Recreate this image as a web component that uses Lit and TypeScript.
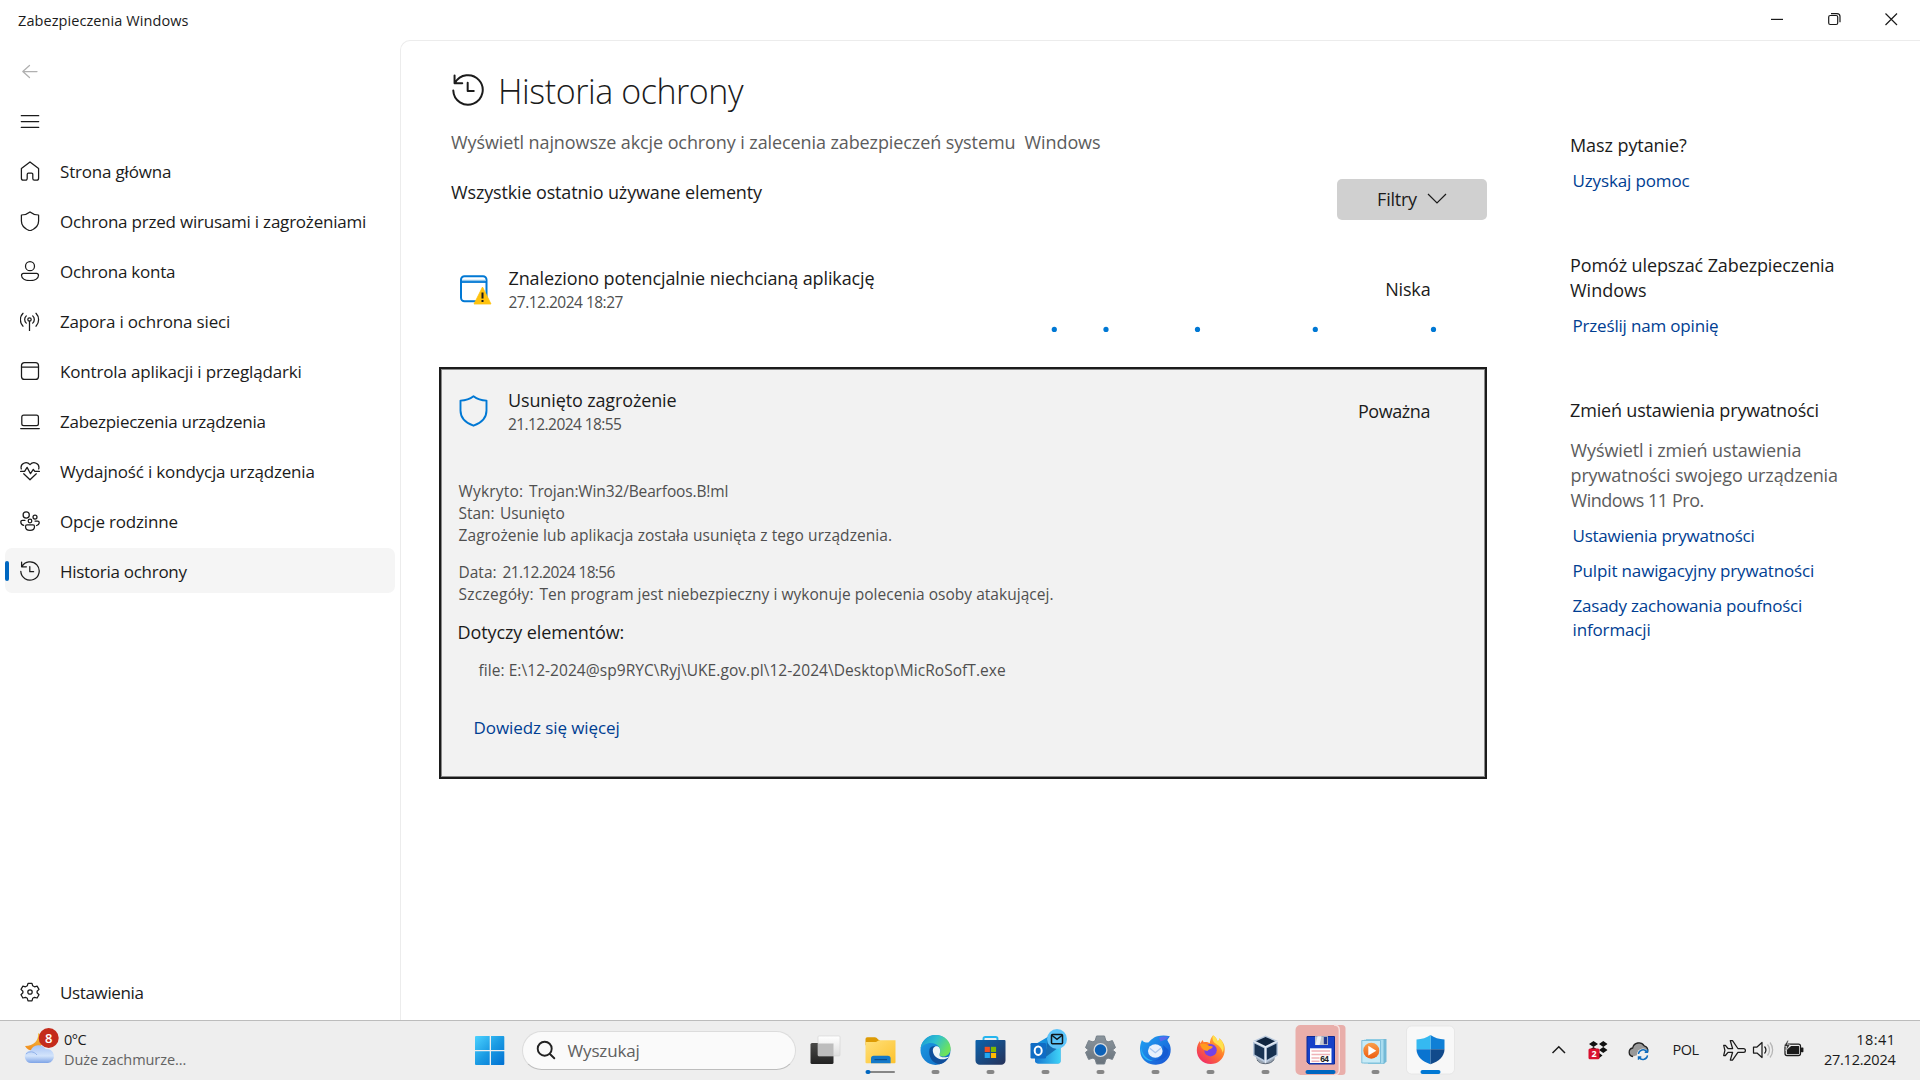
import { LitElement, html, css, svg, TemplateResult, SVGTemplateResult } from "lit";
import { customElement, property } from "lit/decorators.js";

/** A single line of text whose tracking is tuned so its ink spans `ink` pixels. */
@customElement("fit-text")
class FitText extends LitElement {
  @property() text = "";
  @property({ type: Number }) ink = 0;

  static styles = css`
    :host { display: block; white-space: pre; width: max-content; }
  `;

  render() {
    return html`${this.text}`;
  }

  updated() {
    const cs = getComputedStyle(this);
    const ctx = document.createElement("canvas").getContext("2d");
    if (!ctx || !this.ink) return;
    ctx.font = `${cs.fontWeight} ${cs.fontSize} ${cs.fontFamily}`;
    const m = ctx.measureText(this.text);
    const natural = m.actualBoundingBoxLeft + m.actualBoundingBoxRight;
    const gap = (this.ink - natural) / Math.max(1, this.text.length - 1);
    this.style.letterSpacing = `${gap.toFixed(3)}px`;
  }
}

const t = (text: string, ink: number, cls = "") =>
  html`<fit-text class=${cls} .text=${text} .ink=${ink}></fit-text>`;

const stroke = (body: SVGTemplateResult, w = 1.25) =>
  html`<svg class="ico" viewBox="0 0 20 20" width="20" height="20" fill="none" stroke="currentColor" stroke-width=${w} stroke-linecap="round" stroke-linejoin="round">${body}</svg>`;

const historyShape = svg`<path d="M1.6 1v4.8h4.8M1.9 5.6A9.2 9.2 0 1 1 .8 10.3M9.8 5.5v5.2h3.8"/>`;

const NAV: { label: string; ink: number; icon: TemplateResult; active?: boolean }[] = [
  { label: "Strona główna", ink: 111, icon: stroke(svg`<path d="M1.4 7.6 10 .9l8.6 6.7v9.6a2 2 0 0 1-2 2h-2.2a1.6 1.6 0 0 1-1.6-1.6v-4.2a1.2 1.2 0 0 0-1.2-1.2H8.4a1.2 1.2 0 0 0-1.2 1.2v4.2a1.6 1.6 0 0 1-1.6 1.6H3.4a2 2 0 0 1-2-2z"/>`) },
  { label: "Ochrona przed wirusami i zagrożeniami", ink: 304, icon: stroke(svg`<path d="M10 .9c2.3 1.900 5.3 3 8.6 3.100v6c0 4.600-3.200 7.900-8.600 9.800-5.400-1.900-8.600-5.200-8.600-9.800V4C4.700 3.900 7.700 2.800 10 .9z"/>`) },
  { label: "Ochrona konta", ink: 114, icon: stroke(svg`<circle cx="10" cy="5.2" r="4.500"/><path d="M3.400 12.400h13.200a1.900 1.900 0 0 1 1.900 1.900c0 3.400-3.800 5.300-8.500 5.300s-8.500-1.900-8.500-5.300a1.900 1.900 0 0 1 1.900-1.900z"/>`) },
  { label: "Zapora i ochrona sieci", ink: 169, icon: stroke(svg`<circle cx="9.500" cy="8.500" r="1.700"/><path d="M9.500 10.200V20M6.300 12.100a4.800 4.800 0 0 1 0-7.200M12.700 12.100a4.800 4.800 0 0 0 0-7.200M3 15.200A9.300 9.300 0 0 1 3 2.300M16 15.200a9.300 9.300 0 0 0 0-12.900"/>`) },
  { label: "Kontrola aplikacji i przeglądarki", ink: 239.5, icon: stroke(svg`<rect x="1.500" y="1.600" width="17" height="16.800" rx="3"/><path d="M1.500 6h17"/>`) },
  { label: "Zabezpieczenia urządzenia", ink: 205.5, icon: stroke(svg`<rect x="1.800" y="4.200" width="16.600" height="10.400" rx="1.900"/><path d="M.7 17.500h18.600"/>`) },
  { label: "Wydajność i kondycja urządzenia", ink: 254.5, icon: stroke(svg`<path d="M1.300 8C-.1 2.500 6.500-.4 10 3.700 13.500-.4 20.100 2.500 18.700 8M.6 10.400h4l2.500-4 3.400 6.300 2.800-4.400 1.500 2.100h4.600M3.700 12.800l6.300 6 6.300-6"/>`) },
  { label: "Opcje rodzinne", ink: 116.5, icon: stroke(svg`<circle cx="6.200" cy="3.900" r="3.100"/><circle cx="15" cy="6.100" r="2"/><circle cx="10" cy="10" r="1.800"/><path d="M5 9.300H2.400A1.600 1.600 0 0 0 .8 10.900c0 1.800 1.200 3 2.900 3.500M15 10h2.600a1.600 1.600 0 0 1 1.600 1.600c0 1.600-1 2.600-2.700 2.900M7 13.900h6a1.500 1.500 0 0 1 1.500 1.500c0 2.400-1.900 3.900-4.500 3.900s-4.500-1.500-4.500-3.900A1.500 1.500 0 0 1 7 13.900z"/>`) },
  { label: "Historia ochrony", ink: 126.5, icon: stroke(historyShape), active: true },
];

const gearIcon = stroke(svg`<circle cx="10" cy="10" r="2.200"/><path d="M8 1.300h4l.7 2.500 1.800 1 2.600-.7 1.900 3.300-1.900 1.900v1.500l1.900 1.900-1.900 3.300-2.600-.7-1.800 1-.7 2.500H8l-.7-2.500-1.800-1-2.600.7L1 12.700l1.900-1.900V9.300L1 7.400l1.900-3.300 2.600.7 1.800-1z"/>`);

interface Slot { art: SVGTemplateResult; mark?: "idle" | "active" | "wide" | "group"; hot?: string }

const defs = svg`<defs>
  <linearGradient id="tvd" x2="0" y2="1"><stop stop-color="#4a4a48"/><stop offset="1" stop-color="#222"/></linearGradient>
  <linearGradient id="tvl" x2="0" y2="1"><stop stop-color="#fff"/><stop offset="1" stop-color="#dedede"/></linearGradient>
  <linearGradient id="fold" x2="1" y2="1"><stop stop-color="#ffe07a"/><stop offset="1" stop-color="#fdc22d"/></linearGradient>
  <linearGradient id="eb" x2="1" y2="1"><stop stop-color="#1d9fe6"/><stop offset="1" stop-color="#1067c2"/></linearGradient>
  <linearGradient id="eg" x1="0" x2="1" y2=".5"><stop stop-color="#1593d5"/><stop offset=".5" stop-color="#2fc0cf"/><stop offset="1" stop-color="#6de35c"/></linearGradient>
  <linearGradient id="store" x2="1" y2="1"><stop stop-color="#0c63ad"/><stop offset="1" stop-color="#263158"/></linearGradient>
  <linearGradient id="olk" x2="1" y2="0"><stop stop-color="#1675cf"/><stop offset="1" stop-color="#3fd3f8"/></linearGradient>
  <linearGradient id="gear" x2="0" y2="1"><stop stop-color="#8b959d"/><stop offset="1" stop-color="#69737c"/></linearGradient>
  <linearGradient id="tb" x2="1" y2="1"><stop stop-color="#1fa6f4"/><stop offset="1" stop-color="#1952d2"/></linearGradient>
  <linearGradient id="ff" x1="1" y1="0" x2=".2" y2="1"><stop stop-color="#ffd23f"/><stop offset=".5" stop-color="#ff7a2a"/><stop offset="1" stop-color="#f0286b"/></linearGradient>
  <linearGradient id="wmp" x2="0" y2="1"><stop stop-color="#f9a04b"/><stop offset="1" stop-color="#ee5d12"/></linearGradient>
</defs>`;

/* Taskbar art is drawn in a 55 x 60 cell. */
const SLOTS: Slot[] = [
  {
    art: svg`<rect x="12.500" y="23" width="23" height="21" rx="1.500" fill="url(#tvd)"/>
      <rect x="20" y="16" width="22" height="20" rx="1" fill="url(#tvl)" stroke="#d2d2d2" stroke-width=".6"/>
      <rect x="20" y="23.500" width="15.500" height="12.500" fill="#bdbdbd"/>`,
  },
  {
    mark: "group",
    art: svg`<path d="M12.500 19a1.800 1.800 0 0 1 1.800-1.800h7.600c2.600 0 2.600 3 5.100 3v5H12.500z" fill="#dd9b05"/>
      <path d="M12.500 22h10.500l3-1.800h16.500v22a1 1 0 0 1-1 1h-28a1 1 0 0 1-1-1z" fill="url(#fold)"/>
      <path d="M18 43.200v-4.700a2.800 2.800 0 0 1 2.800-2.800h14a2.800 2.800 0 0 1 2.800 2.800v4.700z" fill="#1479c9"/>
      <path d="M21.500 39.600h12.500" stroke="#0b4f8f" stroke-width="1.200"/>`,
  },
  {
    mark: "idle",
    art: svg`<circle cx="27.500" cy="30" r="15" fill="url(#eb)"/>
      <path d="M12.600 28.500C13.600 20.500 20 15 27.700 15c8.600 0 14.900 6.300 14.900 13.400 0 5-3.700 8.100-7.700 8.100-2.700 0-4-1.200-3.300-2.700 2.600-5.300-2-10.900-9-10.900-4.200 0-8 2.200-10 5.600z" fill="url(#eg)"/>
      <path d="M21.500 29c-1.500 8 3 14.300 10 15.300 4.500-1 8-4 10-8-7 4-17 .5-16.300-7 .3-2 1.300-3 2.600-3.400-3.300-.2-5.600 1-6.300 3.100z" fill="#104f9b"/>
      <path d="M31.600 33.800c1.200-2.600.6-6.800-2.300-7.500-2.900-.6-4.800 2-4.400 5.200.7 5.400 6.600 9.300 13 7.300 1.900-.6 3.200-1.500 3.700-2.600-3.400 1.800-11.300 1.900-10-2.400z" fill="#f1f5f7"/>`,
  },
  {
    mark: "idle",
    art: svg`<path d="M20.500 22v-3.200a1.800 1.800 0 0 1 1.800-1.800h10.400a1.800 1.800 0 0 1 1.800 1.800V22" fill="none" stroke="#25b5ee" stroke-width="1.900"/>
      <path d="M12.500 21a1 1 0 0 1 1-1h28a1 1 0 0 1 1 1v19.500a4.300 4.300 0 0 1-4.300 4.300H16.800a4.300 4.300 0 0 1-4.300-4.300z" fill="url(#store)"/>
      <path fill="#f25022" d="M21.700 26.800h5.200V32h-5.200z"/><path fill="#7fba00" d="M27.900 26.800h5.200V32h-5.200z"/>
      <path fill="#22a7f0" d="M21.700 33h5.200v5h-5.200z"/><path fill="#ffb901" d="M27.900 33h5.200v5h-5.200z"/>`,
  },
  {
    mark: "idle",
    art: svg`<path d="M16 25 33 15l9.500 9v17a2.500 2.500 0 0 1-2.500 2.500H21a4 4 0 0 1-4-4z" fill="#1590dc"/>
      <path d="M18 30l24.500-6.500V41a2.500 2.500 0 0 1-2.500 2.500H20a3 3 0 0 1-3-3z" fill="url(#olk)"/>
      <path d="M27 37.500 42.500 26v-5L30 15z" fill="#125fa8" opacity=".8"/>
      <rect x="12.500" y="23" width="15.500" height="15.500" rx="1.200" fill="#0f6cc4"/>
      <ellipse cx="20.200" cy="30.700" rx="3.500" ry="4.200" fill="none" stroke="#fff" stroke-width="2"/>
      <circle cx="39" cy="19" r="10" fill="#5cc4fa"/>
      <rect x="33.500" y="14.500" width="11" height="9.200" rx="1" fill="none" stroke="#10171c" stroke-width="1.500"/>
      <path d="m33.800 15.300 5.200 4 5.200-4" fill="none" stroke="#10171c" stroke-width="1.400"/>`,
  },
  {
    mark: "idle",
    art: svg`<path d="M23.500 16h8l1.300 4.600 2.200 1.300 4.400-1.300 3.100 7-3 2.400 3 2.400-3.100 7-4.400-1.300-2.200 1.300-1.300 4.600h-8l-1.300-4.600-2.200-1.300-4.400 1.300-3.100-7 3-2.400-3-2.400 3.100-7L20 21.900l2.200-1.300z" fill="url(#gear)" stroke="#77818a" stroke-width="1" stroke-linejoin="round"/>
      <circle cx="27.500" cy="30" r="7" fill="#d9dcdf"/><circle cx="27.500" cy="30" r="5.700" fill="#0d62b8"/>`,
  },
  {
    mark: "idle",
    art: svg`<path d="M14 20c-2.500 6-2.200 9-1.300 14.500C14.500 41 21 45 28 44.800c9-.3 15-7 14.700-15.500-.1-3.200-1-5-2.200-6.800l-1.200-2.500 2.600-3.700c-4-1-8.500-1.100-12.500 0-5 1.400-7 4.500-9 6.200-2-.1-4.800.2-6.400-2.500z" fill="url(#tb)"/>
      <path d="M31 17.500c4-1.500 7-1 9.500-.7-1.500 2-4.500 3.600-8 4.700z" fill="#7a5cf0" opacity=".65"/>
      <path d="M13 27c1 7 5 12 12 14-7 .8-12.500-5-12-14z" fill="#26b5f5"/>
      <path d="M35 25c2 8-2 14-8.500 15.500 8 .5 14-3.500 14-10.500z" fill="#1156cf" opacity=".7"/>
      <ellipse cx="27.300" cy="31" rx="7.300" ry="6.800" fill="#e7f0fc"/>
      <path d="m21.800 28.300 5.500 4.400 5.500-4.400" fill="none" stroke="#a9c6ee" stroke-width="1.300"/>`,
  },
  {
    mark: "idle",
    art: svg`<path d="M30 15.200c3 2 4 4.300 4.600 6 1.500-.6 1.600-2 1.500-3 4.500 3.500 6.400 8 5.400 14-1 7-6.700 11.800-13.800 11.800-7.900 0-13.900-6-13.900-13.800 0-3.700 1.400-7 3.200-9.200l.3 2.400 2.200-3.400 1.200 2.300c2.300-.5 4.500-.1 6 1 .3-2.800 1.300-6 3.500-8.100z" fill="url(#ff)"/>
      <path d="M30 15.200c3 2 4 4.300 4.600 6 1.500-.6 1.600-2 1.500-3 4.500 3.500 6 9.300 3.600 14.500-1-5-4-7-6.500-8.700-3-1.900-4.500-4.800-3.200-8.800z" fill="#ffe14d"/>
      <circle cx="27.500" cy="30.200" r="6.200" fill="#7542e5"/>
      <path d="M17 24c3-1 6-.6 8.500 1.600 1.400.8 3 .4 4.500 1.200-1.500 2.700-4 2-5.500 4.200-3.200-.2-6.500-2.500-7.500-7z" fill="#ff9a1f"/>`,
  },
  {
    mark: "idle",
    art: svg`<path d="M18 38c2 6 16 8.500 19 0l-2-5H18z" fill="#9aa6b4"/>
      <path d="M27.500 15.500 40 21v14.500L27.500 43 15 35.500V21z" fill="#b9c9dd"/>
      <path d="M27.500 17 37 21.200 27.500 26 18 21.200z" fill="#10253f"/>
      <path d="m16.500 23.500 9.700 4.800V40l-9.700-5.500z" fill="#1a3454"/>
      <path d="m38.500 23.500-9.700 4.800V40l9.700-5.500z" fill="#16304f"/>
      <path d="M15 21l12.500 6L40 21M27.500 27v16" stroke="#e5ecf4" stroke-width="1.300" fill="none"/>
      <path d="M19 40c3 5 14 5 17-.5" fill="none" stroke="#5c6775" stroke-width="1"/>`,
  },
  {
    mark: "wide",
    hot: "alert",
    art: svg`<path d="M14 16.500h27.500v27.500H16l-2-2z" fill="#1540c8" stroke="#0e2a94" stroke-width="1"/>
      <rect x="22" y="16.200" width="13" height="8.800" fill="#c3c7cd"/><path d="M24.500 16.200h4l-2 8.800h-4z" fill="#eef0f3"/><rect x="30.800" y="17" width="3.400" height="7.200" fill="#20368e"/>
      <rect x="17" y="28.300" width="21.500" height="14.700" fill="#fff"/>
      <path d="M18.500 31h18.500M18.500 34.500h18.500M18.500 38h8M18.500 41.300h8" stroke="#efb3b8" stroke-width="1.500"/>
      <text x="27" y="41.500" font-size="8.500" font-weight="700" fill="#222" font-family="Liberation Mono, monospace" textLength="9">64</text>`,
  },
  {
    mark: "idle",
    art: svg`<path d="M18 19h20.500v22.500L36 44H20z" fill="#74b9d6"/><path d="M16 19.500h19.500v24H16z" fill="#a9dcef"/>
      <path d="M13.800 20.500h18.700v22.500H13.800z" fill="#c7ebf7" stroke="#6eb6d4" stroke-width=".8"/>
      <circle cx="23.300" cy="30.700" r="8" fill="url(#wmp)"/><path d="m20.300 25.800 8 4.900-8 4.900z" fill="#fff"/>`,
  },
  {
    mark: "active",
    hot: "current",
    art: svg`<path d="M27.500 15c3.800 2.800 8.500 4.300 14 4.500v9.800h-14z" fill="#0f7fd6"/>
      <path d="M27.500 15c-3.800 2.800-8.500 4.300-14 4.500v9.800h14z" fill="#35b9f1"/>
      <path d="M13.500 29.300h14v15c-8.500-2.800-13.700-7.600-14-15z" fill="#0a74d0"/>
      <path d="M41.500 29.300h-14v15c8.500-2.800 13.700-7.600 14-15z" fill="#114a8b"/>`,
  },
];

@customElement("app-root")
class AppRoot extends LitElement {
  static styles = css`
    :host {
      display: flex; flex-direction: column; box-sizing: border-box;
      width: 1920px; height: 1080px; overflow: hidden; background: #fff; color: #1b1b1b;
      font-family: "Open Sans", "Noto Sans", sans-serif; font-size: 17px; line-height: 24px;
    }
    svg { display: block; flex: none; }
    .l { font-size: 18px; line-height: 24px; }
    .m { font-size: 17px; line-height: 24px; }
    .s { font-size: 15.5px; line-height: 22px; color: #4f4f4f; }
    .xs { font-size: 14.5px; line-height: 20px; }
    .grey { color: #5c5c5c; }
    .link { font-size: 17px; line-height: 24px; color: #003e92; }

    .titlebar { display: flex; justify-content: space-between; height: 40px; flex: none; }
    .caption { padding: 10.5px 0 0 18px; }
    .wincontrols { display: flex; }
    .wincontrols svg { width: 57px; height: 40px; }

    .body { display: flex; height: 980px; flex: none; }
    .sidebar { display: flex; flex-direction: column; gap: 5px; width: 400px; box-sizing: border-box; padding: 8px 5px 6px; flex: none; }
    .row { display: flex; align-items: center; height: 45px; border-radius: 7px; flex: none; }
    .row .pill { width: 4px; height: 20px; border-radius: 2px; margin-right: 11px; }
    .row .m { margin: 2px 0 0 20px; }
    .row.active { background: #f5f5f5; }
    .row.active .pill { background: #0067c0; }
    .row.last { margin-top: auto; }
    .row.faded { color: #b0b0b0; }

    .panel { flex: 1; display: flex; border: 1px solid #ececec; border-right: 0; border-bottom: 0; border-top-left-radius: 10px; padding-left: 38px; box-sizing: border-box; }
    .content { width: 1048px; display: flex; flex-direction: column; flex: none; }
    .heading { display: flex; align-items: center; height: 44px; margin: 28px 0 0 12.5px; gap: 14.5px; }
    .heading svg { margin-top: -3px; }
    .h1 { font-size: 34px; line-height: 44px; font-weight: 300; }
    .sub { margin: 17px 0 0 12px; }
    .filters { display: flex; justify-content: space-between; margin: 25px 0 0 12px; }
    .filters > .l { margin-top: 1px; }
    .button { display: flex; align-items: center; justify-content: center; gap: 10px; width: 150px; height: 41px; border-radius: 5px; background: #d0d0d0; box-sizing: border-box; padding-bottom: 1px; }
    .item { display: grid; grid-template-columns: 49px 1fr auto; height: 47px; flex: none; }
    .item.first { margin: 46px 56.5px 0 20px; }
    .item.second { margin: 19px 55px 0 18px; }
    .item.first .names { margin-left: .5px; }
    .item .names { display: flex; flex-direction: column; gap: 1px; }
    .item .sev { margin-top: 11px; }
    .item svg { margin-top: 7px; }
    .progress { margin-top: 13px; }
    .card { margin-top: 35px; height: 412px; box-sizing: border-box; border: 2px solid #1b1b1b; box-shadow: inset 0 0 0 1px #8a8a8a; background: #f2f2f2; display: flex; flex-direction: column; flex: none; }
    .details { display: flex; flex-direction: column; padding-left: 17.5px; margin-top: 45px; }
    .pair { display: grid; }
    .p1 { grid-template-columns: 70.5px 1fr; }
    .p2 { grid-template-columns: 41.5px 1fr; }
    .p3 { grid-template-columns: 44px 1fr; }
    .p4 { grid-template-columns: 81px 1fr; }
    .gap { margin-top: 15px; }
    .details > .l.gap { margin-left: -1px; }
    .file { margin: 15px 0 0 20px; }
    .more { margin: 35px 0 0 15px; }

    .aside { display: flex; flex-direction: column; margin-left: 83px; padding-top: 92px; }
    .aside .link { margin: 12px 0 0 2.5px; }
    .aside .sec { margin-top: 60px; }
    .aside .next { margin-top: 1px; }
    .aside .para { display: flex; flex-direction: column; margin: 16px 0 0 .5px; gap: 1px; }
    .aside .tight { margin-top: 11px; }
    .aside .two { display: flex; flex-direction: column; margin-top: 10.5px; }
    .aside .two .link { margin-top: 0; }

    .taskbar { display: flex; height: 60px; box-sizing: border-box; flex: none; background: #eeeeee; box-shadow: inset 0 1px 0 #bcbcbc; }
    .weather { display: flex; width: 462px; flex: none; }
    .weather .names { padding-top: 9.5px; }
    .weather .names .grey { color: #626262; }
    .search { display: flex; align-items: center; margin: 11px 2px 0 4.5px; width: 274.5px; height: 38.5px; box-sizing: border-box; border: 1px solid #dcdcdc; border-bottom-color: #bdbdbd; border-radius: 20px; background: #fafafa; padding-left: 13px; gap: 12px; flex: none; }
    .search .m { color: #606060; margin-top: 1px; }
    .slots { display: flex; width: 660px; flex: none; }
    .tray { flex: 1; display: flex; padding-left: 85.5px; }
    .pol { padding: 20px 1px 0 16px; width: 37px; }
    .clock { display: flex; flex-direction: column; align-items: flex-end; margin-left: auto; padding: 9.5px 24.5px 0 0; }
  `;

  private row(label: string, ink: number, icon: TemplateResult, mod = "") {
    return html`<div class="row ${mod}"><span class="pill"></span>${icon}${label ? t(label, ink, "m") : ""}</div>`;
  }

  private slotCell(s: Slot) {
    return html`<svg width="55" height="60" viewBox="0 0 55 60">
      ${s.hot === "alert" ? svg`<path d="M7.500 5H49a3.500 3.500 0 0 1 3.500 3.500v43A3.500 3.500 0 0 1 49 55H7.500A5 5 0 0 1 2.500 50V10a5 5 0 0 1 5-5z" fill="#e9aeaa"/><path d="M41 5c3.500 0 5.300 2 5.300 5v40c0 3-1.800 5-5.300 5" fill="none" stroke="#f6e2e1" stroke-width="1.400"/>` : ""}
      ${s.hot === "current" ? svg`<rect x="3.500" y="6" width="48" height="48" rx="5" fill="#f8f8f8" stroke="#e3e3e3" stroke-width=".8"/>` : ""}
      ${s.art}
      ${s.mark === "idle" ? svg`<rect x="23.500" y="50" width="8" height="4" rx="2" fill="#868686"/>` : ""}
      ${s.mark === "wide" ? svg`<rect x="12.500" y="50" width="30" height="4" rx="2" fill="#0067c0"/>` : ""}
      ${s.mark === "active" ? svg`<rect x="17.500" y="50" width="20" height="4" rx="2" fill="#0078d4"/>` : ""}
      ${s.mark === "group" ? svg`<rect x="14" y="51" width="28" height="2" rx="1" fill="#868686"/><rect x="12.500" y="50" width="5" height="4" rx="2" fill="#0067c0"/>` : ""}
    </svg>`;
  }

  render() {
    return html`
      <header class="titlebar">
        ${t("Zabezpieczenia Windows", 170.5, "xs caption")}
        <div class="wincontrols">
          <svg viewBox="0 0 57 40"><path d="M22 19.400h12" stroke="#1b1b1b" stroke-width="1.200"/></svg>
          <svg viewBox="0 0 57 40" fill="none" stroke="#1b1b1b" stroke-width="1.200"><rect x="22.700" y="15.500" width="9" height="9" rx="1.500"/><path d="M25 13.600h6a3 3 0 0 1 3 3v5.600"/></svg>
          <svg viewBox="0 0 57 40"><path d="m22.500 13.500 11.500 11.500m0-11.500L22.500 25" stroke="#1b1b1b" stroke-width="1.200"/></svg>
        </div>
      </header>

      <div class="body">
        <nav class="sidebar">
          ${this.row("", 0, stroke(svg`<path d="M17 10.500H3M9.500 4.500l-6.700 6 6.700 6"/>`), "faded")}
          ${this.row("", 0, stroke(svg`<path d="M1.300 4.700h17.400M1.300 10.600h17.400M1.300 16.400h17.400"/>`))}
          ${NAV.map((n) => this.row(n.label, n.ink, n.icon, n.active ? "active" : ""))}
          ${this.row("Ustawienia", 82.5, gearIcon, "last")}
        </nav>

        <main class="panel">
          <section class="content">
            <div class="heading">
              <svg width="32" height="32" viewBox="0 0 20 20" fill="none" stroke="#1b1b1b" stroke-width="1.250" stroke-linecap="round" stroke-linejoin="round">${historyShape}</svg>
              ${t("Historia ochrony", 243, "h1")}
            </div>
            ${t("Wyświetl najnowsze akcje ochrony i zalecenia zabezpieczeń systemu  Windows", 649, "l sub grey")}
            <div class="filters">
              ${t("Wszystkie ostatnio używane elementy", 312, "l")}
              <div class="button">
                ${t("Filtry", 40, "l")}
                <svg width="20" height="12" viewBox="0 0 20 12"><path d="m1 1 9 9 9-9" fill="none" stroke="#1b1b1b" stroke-width="1.200"/></svg>
              </div>
            </div>

            <div class="item first">
              <svg width="33" height="32" viewBox="0 0 33 32">
                <rect x="2" y="3.200" width="25.500" height="25" rx="3.500" fill="#fff" stroke="#0078d4" stroke-width="2"/>
                <path d="M3 7.500h23.500" stroke="#8cc4ec" stroke-width="1.500"/><path d="M2 9h25.500" stroke="#0078d4" stroke-width="1.800"/>
                <path d="M23.500 14 32 31H15z" fill="#ffc20e" stroke="#ffc20e" stroke-width=".8" stroke-linejoin="round"/>
                <path d="M23.500 19.500v6M23.500 27v2" stroke="#1b1b1b" stroke-width="2"/>
              </svg>
              <div class="names">${t("Znaleziono potencjalnie niechcianą aplikację", 366, "l")}${t("27.12.2024 18:27", 115, "s")}</div>
              ${t("Niska", 43.5, "l sev")}
            </div>

            <svg class="progress" width="1048" height="6" viewBox="0 0 1048 6" fill="#0078d4">
              ${[615.3, 667, 758.5, 876.3, 994.5].map((x) => svg`<circle cx=${x} cy="3.400" r="2.600"/>`)}
            </svg>

            <article class="card">
              <div class="item second">
                <svg width="30" height="32" viewBox="0 0 30 32"><path d="M14.500 1.200c3.400 2.600 7.900 4.200 13 4.400v9.800c0 7.100-4.800 12.300-13 15.300-8.200-3-13-8.200-13-15.300V5.600c5.100-.2 9.600-1.800 13-4.400z" fill="none" stroke="#0078d4" stroke-width="1.900" stroke-linejoin="round"/></svg>
                <div class="names">${t("Usunięto zagrożenie", 167.5, "l")}${t("21.12.2024 18:55", 113, "s")}</div>
                ${t("Poważna", 70.5, "l sev")}
              </div>
              <div class="details">
                <div class="pair p1">${t("Wykryto:", 63.5, "s")}${t("Trojan:Win32/Bearfoos.B!ml", 198.5, "s")}</div>
                <div class="pair p2">${t("Stan:", 35, "s")}${t("Usunięto", 63.5, "s")}</div>
                ${t("Zagrożenie lub aplikacja została usunięta z tego urządzenia.", 432.5, "s")}
                <div class="pair p3 gap">${t("Data:", 36, "s")}${t("21.12.2024 18:56", 113, "s")}</div>
                <div class="pair p4">${t("Szczegóły:", 74, "s")}${t("Ten program jest niebezpieczny i wykonuje polecenia osoby atakującej.", 513, "s")}</div>
                ${t("Dotyczy elementów:", 165, "l gap")}
                ${t("file: E:\\12-2024@sp9RYC\\Ryj\\UKE.gov.pl\\12-2024\\Desktop\\MicRoSofT.exe", 526.5, "s file")}
                ${t("Dowiedz się więcej", 144, "link more")}
              </div>
            </article>
          </section>

          <aside class="aside">
            ${t("Masz pytanie?", 116, "l")}
            ${t("Uzyskaj pomoc", 116, "link")}
            ${t("Pomóż ulepszać Zabezpieczenia", 262.5, "l sec")}
            ${t("Windows", 76, "l next")}
            ${t("Prześlij nam opinię", 144.5, "link")}
            ${t("Zmień ustawienia prywatności", 248.5, "l sec")}
            <div class="para">
              ${t("Wyświetl i zmień ustawienia", 230, "l grey")}
              ${t("prywatności swojego urządzenia", 265.5, "l grey")}
              ${t("Windows 11 Pro.", 133, "l grey")}
            </div>
            ${t("Ustawienia prywatności", 180, "link")}
            ${t("Pulpit nawigacyjny prywatności", 239.5, "link tight")}
            <div class="two">
              ${t("Zasady zachowania poufności", 228.5, "link")}
              ${t("informacji", 76, "link")}
            </div>
          </aside>
        </main>
      </div>

      <footer class="taskbar">
        <div class="weather">
          <svg width="64" height="60" viewBox="0 0 64 60">
            <defs>
              <linearGradient id="cl" x2="0" y2="1"><stop stop-color="#a8c4f5"/><stop offset=".6" stop-color="#d3e4fb"/><stop offset="1" stop-color="#7da3e6"/></linearGradient>
              <linearGradient id="mo" x2="0" y2="1"><stop stop-color="#f6c544"/><stop offset="1" stop-color="#f08a1c"/></linearGradient>
            </defs>
            <path d="M38 13c1 7-4 13-13 13 2 4 7 5.500 11 4 4-1.500 7-6 6-11-.5-2.500-2-5-4-6z" fill="url(#mo)"/>
            <path d="M31.500 43a6.300 6.300 0 0 1-.8-12.600 8.600 8.600 0 0 1 15-1.400A7 7 0 1 1 48 43z" fill="url(#cl)"/>
            <path d="M26 34c3-3 8-3 11 1" fill="none" stroke="#8fb0ea" stroke-width="1"/>
            <circle cx="48.700" cy="18" r="10" fill="#c42b1c"/>
            <text x="48.700" y="22.800" font-size="13" font-weight="600" fill="#fff" text-anchor="middle" font-family="Open Sans, sans-serif">8</text>
          </svg>
          <div class="names">${t("0°C", 22.5, "xs")}${t("Duże zachmurze...", 120.5, "xs grey")}</div>
        </div>
        <svg width="55" height="60" viewBox="0 0 55 60">
          <defs><linearGradient id="win" x2="1" y2="1"><stop stop-color="#4cd2ff"/><stop offset=".5" stop-color="#1b9be3"/><stop offset="1" stop-color="#0070d2"/></linearGradient></defs>
          <path d="M14 16h13.700v13.900H13V17a1 1 0 0 1 1-1zm15 0h12.300a1 1 0 0 1 1 1v12.900H29zM13 31.200h14.700V45H14a1 1 0 0 1-1-1zm16 0h13.300V44a1 1 0 0 1-1 1H29z" fill="url(#win)"/>
        </svg>
        <div class="search">
          <svg width="20" height="20" viewBox="0 0 20 20" fill="none" stroke="#222" stroke-width="1.900" stroke-linecap="round"><circle cx="8.700" cy="8.700" r="7"/><path d="m13.900 14 4.400 4.300"/></svg>
          ${t("Wyszukaj", 71, "m")}
        </div>
        <div class="slots">
          ${SLOTS.map((s) => this.slotCell(s))}
          <svg width="0" height="0">${defs}</svg>
        </div>
        <div class="tray">
          <svg width="113" height="60" viewBox="0 0 113 60">
            <path d="m8.500 33 6.300-6.200L21 33" fill="none" stroke="#1b1b1b" stroke-width="1.500"/>
            <path fill="#111" d="m45 24 4.500-3 4.500 3-4.500 3zM55 24l4.300-3 4.200 3-4.200 3zM45 30l4.500-3 4.500 3-4.500 3zM55 30l4.300-3 4.200 3-4.200 3zM50.500 35.500l4-3 4 3-4 3z"/>
            <rect x="44.500" y="28.500" width="11" height="10.800" rx="1.500" fill="#d9102f"/>
            <text x="50" y="37" font-size="9" font-weight="700" fill="#fff" text-anchor="middle" font-family="Open Sans, sans-serif">2</text>
            <path d="M89 36.500a4.300 4.300 0 0 1-.3-8.500 6.300 6.300 0 0 1 11.500-2.200 5.300 5.300 0 0 1 3.500 6" fill="#999" stroke="#222" stroke-width="1.300"/>
            <circle cx="99" cy="34.500" r="6" fill="#eee"/>
            <path d="M94.500 34a4.600 4.600 0 0 1 8.300-2.300M103.500 29.500v2.800h-2.800M103.500 35.300a4.600 4.600 0 0 1-8.300 2.200M94.500 39.800V37h2.800" fill="none" stroke="#0f6cbd" stroke-width="1.400"/>
          </svg>
          <div class="pol">${t("POL", 26, "xs")}</div>
          <svg width="96" height="60" viewBox="0 0 96 60" fill="none" stroke="#1b1b1b" stroke-width="1.250" stroke-linejoin="round">
            <path d="M12.700 25.300h1.700l2.600 3.200h4.600l-2.300-7.800h2.200l5.400 7.800h5.600a1.900 1.900 0 0 1 0 3.800h-5.600l-5.400 7.800h-2.200l2.300-7.800H17l-2.600 3.200h-1.700l1.200-5.100z"/>
            <path d="M42.500 27h3.500l5-4.500v15L46 33h-3.500z"/><path d="M53.500 26.500a5.500 5.500 0 0 1 0 7" /><path d="M56.500 24.500a8.500 8.500 0 0 1 0 11M59 22.500a12 12 0 0 1 0 15" stroke="#b5b5b5"/>
            <rect x="74" y="24" width="15.500" height="11.500" rx="2"/><path d="M76.500 33.500V30l4-3.500h7v7z" fill="#1b1b1b"/><path d="M90.500 28h1.300v3.500h-1.300z" fill="#1b1b1b"/>
            <path d="M76.500 20.500 73 26.300h3L74.800 31l4.200-6.200h-3l1.500-4.300z" fill="#1b1b1b" stroke="#eee" stroke-width=".5"/>
          </svg>
          <div class="clock">${t("18:41", 35.5, "xs")}${t("27.12.2024", 72.5, "xs")}</div>
        </div>
      </footer>
    `;
  }
}
